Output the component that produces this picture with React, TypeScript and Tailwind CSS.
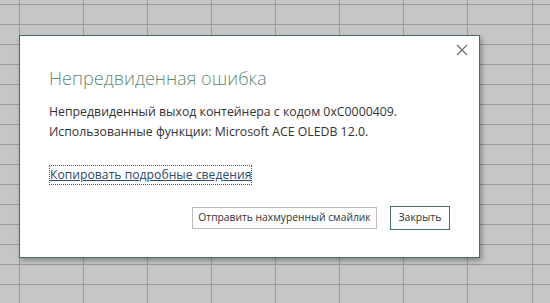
import React from "react";

const COLS = [20, 64, 64, 64, 64, 64, 64, 64, 65, 64];
const ROWS = [5, 20, 20, 20, 20, 20, 20, 20, 20, 20, 20, 20, 20, 20, 20, 20];

export default function App() {
  return (
    <div
      className="relative w-[550px] h-[303px] overflow-hidden bg-[#c6c6c6]"
      style={{ fontFamily: '"Open Sans", "Noto Sans", sans-serif' }}
    >
      <div className="flex flex-col">
        {ROWS.map((h, r) => (
          <div key={r} className="flex shrink-0" style={{ height: h }}>
            {COLS.map((w, c) => (
              <div
                key={c}
                className="shrink-0 border-r border-b border-[#9c9c9c]"
                style={{ width: w }}
              />
            ))}
          </div>
        ))}
      </div>

      <div className="absolute left-[19px] top-[35px] w-[461px] h-[223px] bg-white border border-[#3d7558] shadow-[2px_3px_5px_rgba(0,0,0,0.3)]">
        <button className="absolute right-[11px] top-[8px] w-[12px] h-[12px] flex items-center justify-center">
          <svg width="12" height="12" viewBox="0 0 12 12">
            <path d="M1 1 L11 11 M11 1 L1 11" stroke="#6b6b6b" strokeWidth="1.1" fill="none" />
          </svg>
        </button>

        <div className="pl-[29px] pt-[30px]">
          <div className="text-[18.2px] leading-[24px] font-light text-[#5f8c74] whitespace-nowrap">
            Непредвиденная ошибка
          </div>
          <div className="mt-[12px] text-[12.3px] leading-[20px] text-[#333333] whitespace-nowrap">
            <div>Непредвиденный выход контейнера с кодом 0xC0000409.</div>
            <div>Использованные функции: Microsoft ACE OLEDB 12.0.</div>
          </div>
          <div className="mt-[19px]">
            <span className="inline-block border border-dotted border-[#555] leading-[18px] text-[12.2px] text-[#2e4a6e] underline whitespace-nowrap">
              Копировать подробные сведения
            </span>
          </div>
        </div>

        <div className="absolute left-[172px] top-[170px] flex gap-[13px] items-center">
          <button className="h-[22px] w-[185px] border border-[#bdbdbd] text-[10.3px] text-[#333] bg-white whitespace-nowrap">
            Отправить нахмуренный смайлик
          </button>
          <button className="h-[24px] w-[60px] border-[1.5px] border-[#3d7558] text-[10.5px] text-[#333] bg-white whitespace-nowrap">
            Закрыть
          </button>
        </div>
      </div>
    </div>
  );
}
